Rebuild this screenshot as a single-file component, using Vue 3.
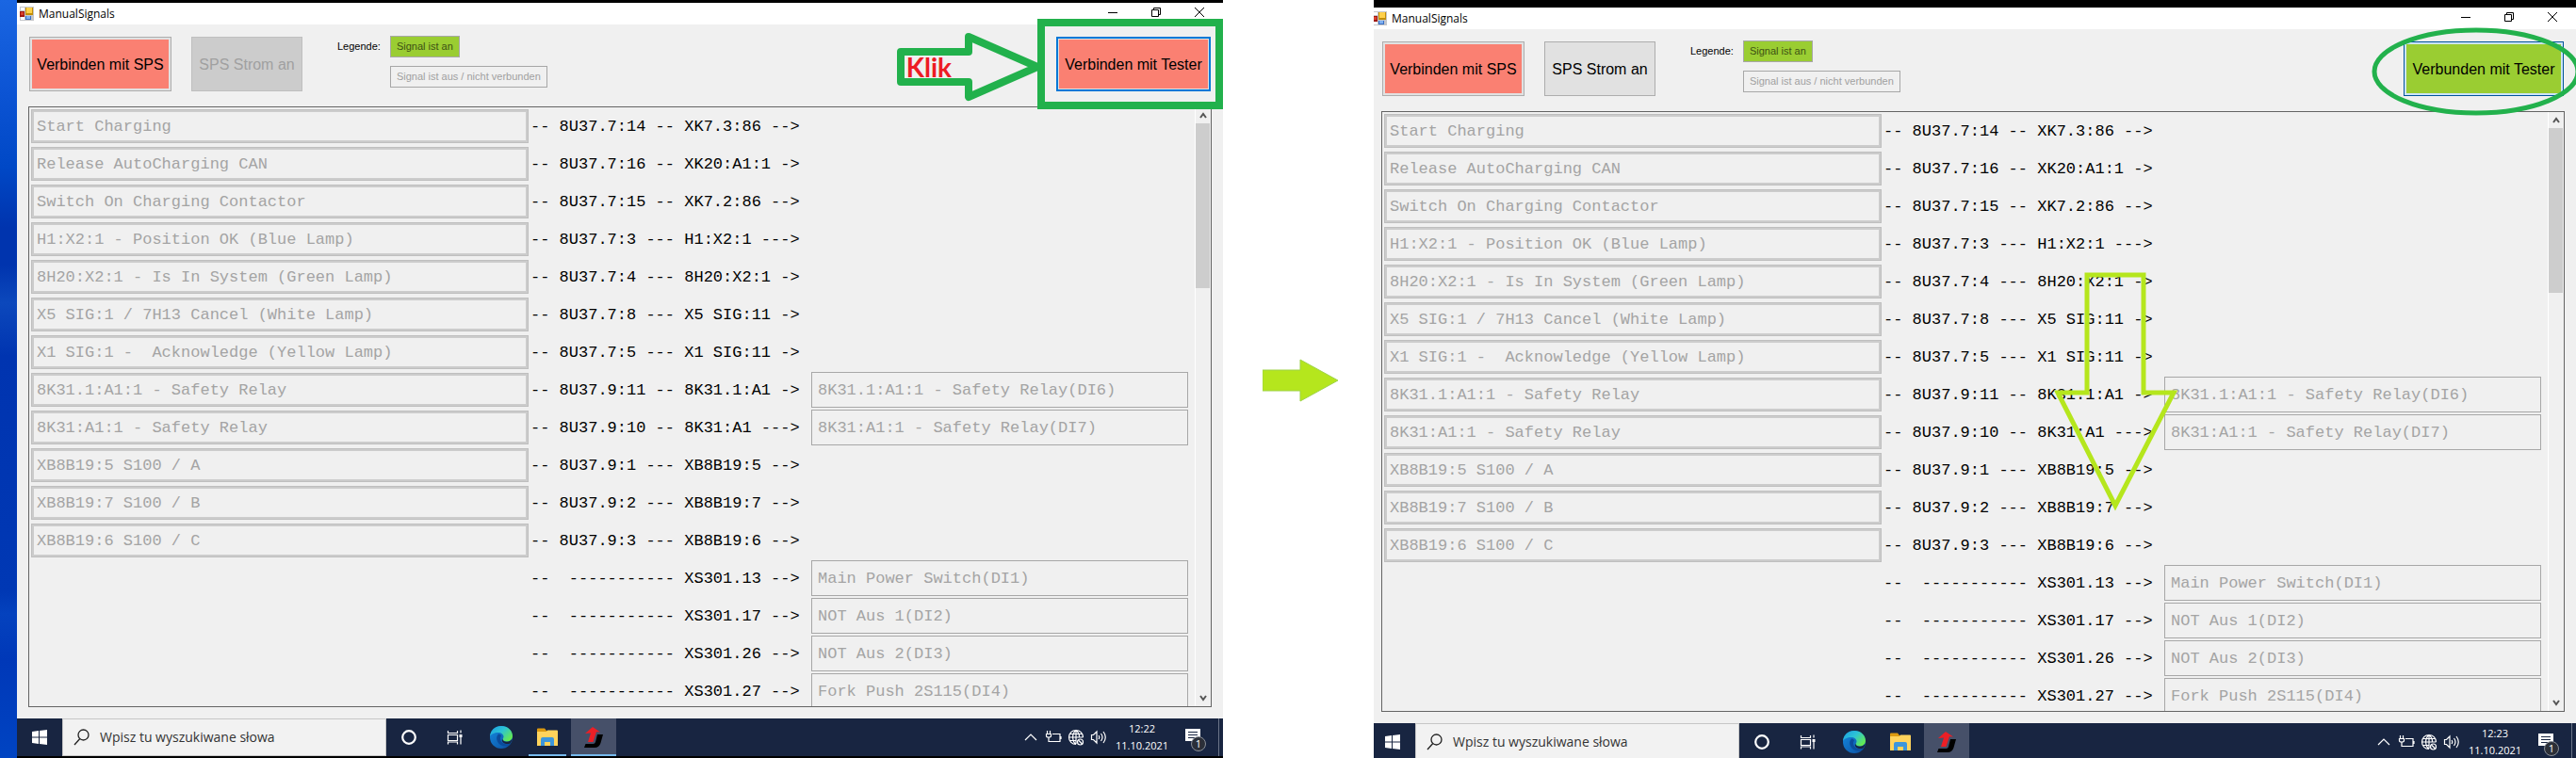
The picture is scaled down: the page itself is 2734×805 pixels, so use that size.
<script setup>
const rows = [
  ['Start Charging', '-- 8U37.7:14 -- XK7.3:86 -->', ''],
  ['Release AutoCharging CAN', '-- 8U37.7:16 -- XK20:A1:1 ->', ''],
  ['Switch On Charging Contactor', '-- 8U37.7:15 -- XK7.2:86 -->', ''],
  ['H1:X2:1 - Position OK (Blue Lamp)', '-- 8U37.7:3 --- H1:X2:1 --->', ''],
  ['8H20:X2:1 - Is In System (Green Lamp)', '-- 8U37.7:4 --- 8H20:X2:1 ->', ''],
  ['X5 SIG:1 / 7H13 Cancel (White Lamp)', '-- 8U37.7:8 --- X5 SIG:11 ->', ''],
  ['X1 SIG:1 -  Acknowledge (Yellow Lamp)', '-- 8U37.7:5 --- X1 SIG:11 ->', ''],
  ['8K31.1:A1:1 - Safety Relay', '-- 8U37.9:11 -- 8K31.1:A1 ->', '8K31.1:A1:1 - Safety Relay(DI6)'],
  ['8K31:A1:1 - Safety Relay', '-- 8U37.9:10 -- 8K31:A1 --->', '8K31:A1:1 - Safety Relay(DI7)'],
  ['XB8B19:5 S100 / A', '-- 8U37.9:1 --- XB8B19:5 -->', ''],
  ['XB8B19:7 S100 / B', '-- 8U37.9:2 --- XB8B19:7 -->', ''],
  ['XB8B19:6 S100 / C', '-- 8U37.9:3 --- XB8B19:6 -->', ''],
  ['', '--  ----------- XS301.13 -->', 'Main Power Switch(DI1)'],
  ['', '--  ----------- XS301.17 -->', 'NOT Aus 1(DI2)'],
  ['', '--  ----------- XS301.26 -->', 'NOT Aus 2(DI3)'],
  ['', '--  ----------- XS301.27 -->', 'Fork Push 2S115(DI4)'],
]

const screens = [
  { id: 'before', connected: false, tester: 'Verbinden mit Tester', time: '12:22' },
  { id: 'after', connected: true, tester: 'Verbunden mit Tester', time: '12:23' },
]
</script>

<template>
  <main class="page">
    <section v-for="s in screens" :key="s.id" class="view" :class="s.id">
      <div class="screen">
        <header class="titlebar">
          <svg class="app-icon" width="15" height="15" viewBox="0 0 15 15" aria-hidden="true">
            <rect width="15" height="15" fill="#c4c6ca" />
            <rect x="1" y="1" width="4" height="3" fill="#fff" />
            <rect x="1" y="11" width="4" height="3" fill="#fff" />
            <rect x="0" y="5" width="5" height="6" fill="#a01a14" />
            <rect x="1" y="6" width="3" height="3" fill="#d8402c" />
            <rect x="6" y="1" width="8" height="8" fill="#c18d08" />
            <rect x="7" y="1" width="6" height="6" fill="#ffd04a" />
            <rect x="6" y="10" width="6" height="4" fill="#3a6fc4" />
            <rect x="7" y="10" width="4" height="3" fill="#7fb0f0" />
          </svg>
          <h1>ManualSignals</h1>
          <div class="caption">
            <button type="button" aria-label="Minimize">
              <svg width="12" height="12" viewBox="0 0 12 12"><path d="M1 6.5h10" /></svg>
            </button>
            <button type="button" aria-label="Restore">
              <svg width="12" height="12" viewBox="0 0 12 12"><path d="M1.500 3.500h7v7h-7zM3.500 3.500v-2h7v7h-2" /></svg>
            </button>
            <button type="button" aria-label="Close">
              <svg width="12" height="12" viewBox="0 0 12 12"><path d="M1 1l10 10M11 1L1 11" /></svg>
            </button>
          </div>
        </header>

        <div class="toolbar">
          <button type="button" class="cmd sps">Verbinden mit SPS</button>
          <button type="button" class="cmd power" :disabled="!s.connected">SPS Strom an</button>
          <div class="legend">
            <span>Legende:</span>
            <div class="legend-items">
              <span class="on">Signal ist an</span>
              <span class="off">Signal ist aus / nicht verbunden</span>
            </div>
          </div>
          <button type="button" class="cmd tester" :class="{ connected: s.connected }">{{ s.tester }}</button>
        </div>

        <div class="panel">
          <ul class="rows">
            <li v-for="r in rows" :key="r[1]">
              <button v-if="r[0]" type="button" class="signal" disabled>{{ r[0] }}</button>
              <span class="wire">{{ r[1] }}</span>
              <span v-if="r[2]" class="input-signal">{{ r[2] }}</span>
            </li>
          </ul>
          <div class="scrollbar" aria-hidden="true">
            <svg width="8" height="8" viewBox="0 0 8 8"><path d="M1 6l3-4 3 4" /></svg>
            <div class="track"><div class="thumb"></div></div>
            <svg width="8" height="8" viewBox="0 0 8 8"><path d="M1 2l3 4 3-4" /></svg>
          </div>
        </div>

        <footer class="taskbar">
          <button type="button" class="start" aria-label="Start">
            <svg width="16" height="16" viewBox="0 0 16 16" fill="#fff">
              <path d="M0 2l7-1v6.500H0zM8 .9L16 0v7.500H8zM0 8.500h7V15l-7-1zM8 8.500h8V16l-8-1z" />
            </svg>
          </button>
          <label class="search">
            <svg width="17" height="18" viewBox="0 0 17 18" fill="none" stroke="#222" stroke-width="1.300">
              <circle cx="10.500" cy="6.500" r="5.500" /><path d="M6.800 10.500L1 17" />
            </svg>
            <input type="text" placeholder="Wpisz tu wyszukiwane słowa" aria-label="Wpisz tu wyszukiwane słowa" />
          </label>
          <nav class="apps">
            <button type="button" aria-label="Cortana">
              <svg width="18" height="18" viewBox="0 0 18 18"><circle cx="9" cy="9" r="6.800" fill="none" stroke="#fff" stroke-width="2.200" /></svg>
            </button>
            <button type="button" aria-label="Task view">
              <svg width="18" height="18" viewBox="0 0 18 18" fill="none" stroke="#fff" stroke-width="1.200">
                <path d="M1.500 2v2.500h10V2M1.500 6.500h10v6h-10zM1.500 16.500v-2.500h10v2.500M15 1.500v3M15 9v7.500" /><path d="M13.500 6h3v3h-3z" fill="#fff" stroke="none" />
              </svg>
            </button>
            <button type="button" aria-label="Edge">
              <svg width="24" height="24" viewBox="0 0 24 24">
                <defs>
                  <linearGradient :id="'edge-top-' + s.id" x1="0" y1="0" x2="1" y2="0.700">
                    <stop offset="0" stop-color="#1b9de2" /><stop offset="0.500" stop-color="#2cc3d6" /><stop offset="1" stop-color="#66eb4e" />
                  </linearGradient>
                  <linearGradient :id="'edge-low-' + s.id" x1="0" y1="0" x2="1" y2="1">
                    <stop offset="0" stop-color="#1489e0" /><stop offset="1" stop-color="#0c4fa0" />
                  </linearGradient>
                </defs>
                <circle cx="12" cy="12" r="12" :fill="`url(#edge-low-${s.id})`" />
                <path d="M0 11C.5 4.500 5.500 0 12 0c7 0 12 5 12 10.500 0 3.500-2.500 6-6 6-2.500 0-4.500-1-4.500-2.200 0-.9 1-1.300 1-3C14.500 9 12 7 8.800 7 4.500 7 1 9 0 11z" :fill="`url(#edge-top-${s.id})`" />
                <path d="M9 8.500c-2 2-2.500 5-1 8 1.500 3.200 5 5 8.500 5 2.500-.2 4.500-1.500 5.500-3-2 1-5 1.500-7.500 0C11 16.500 10 13 12 10.500c-.5-1.200-1.500-1.800-3-2z" fill="#0b4c9c" />
                <path d="M13.500 13.500c-.4 1.800 1.500 3.300 4.500 3.300 2.200 0 4.300-1 5.500-3-.3 2-1 3.500-2 4.700-2.500 1-5.500.7-7.300-.7-1.500-1.300-1.800-3-.7-4.300z" fill="#182541" />
              </svg>
            </button>
            <button type="button" class="running" aria-label="Explorer">
              <svg width="22" height="20" viewBox="0 0 22 20">
                <path d="M0 1.500Q0 .5 1 .5h7l2 2.500h11q1 0 1 1v3H0z" fill="#dc9a10" />
                <path d="M0 4h10l1-1.500h10q1 0 1 1V19H0z" fill="#ffd35c" />
                <path d="M4 19v-7q0-2 2-2h10q2 0 2 2v7h-4v-4H8v4z" fill="#3c96dc" />
              </svg>
            </button>
            <button type="button" class="running active" aria-label="ManualSignals">
              <svg width="22" height="22" viewBox="0 0 22 22">
                <path d="M15 8h6l-2.500 9q-1.500 5-6.500 5H1l1.500-4h8q2 0 2.500-2z" fill="#000" />
                <path d="M10 0l8 5.500-4-.2L10.500 16H5l3-9.500-6 .5z" fill="#ec1f26" />
              </svg>
            </button>
          </nav>
          <div class="tray">
            <button type="button" aria-label="Hidden icons">
              <svg width="18" height="18" viewBox="0 0 18 18"><path d="M3 12l6-6 6 6" /></svg>
            </button>
            <button type="button" aria-label="Battery">
              <svg width="18" height="18" viewBox="0 0 18 18"><path d="M8 5.500h8v8H6M2.500 2v3M5.500 2v3M1.500 5.500h5v2q0 1.500-2.500 1.500t-2.500-1.500zM4 9v4.500h3M17 8v3" /></svg>
            </button>
            <button type="button" aria-label="Network">
              <svg width="18" height="18" viewBox="0 0 18 18"><path d="M9 16.500A7.500 7.500 0 1 1 16.500 9M9 16.500C4.500 13 4.500 5 9 1.500 12 4 12.700 6.500 12.500 9M9 1.500V16M1.500 9h15M2.500 5.500h13M2.500 12.500h7" /><circle cx="13.500" cy="14" r="3" /><path d="M11.500 12l4 4" /></svg>
            </button>
            <button type="button" aria-label="Volume">
              <svg width="18" height="18" viewBox="0 0 18 18"><path d="M1.500 6.500h2L7 3v12l-3.500-3.500h-2zM9 7q1.500 2 0 4M11.500 5q3 4 0 8M14 3q4.500 6 0 12" /></svg>
            </button>
          </div>
          <div class="clock"><time>{{ s.time }}</time><span>11.10.2021</span></div>
          <button type="button" class="notify" aria-label="Notifications">
            <svg width="18" height="18" viewBox="0 0 18 18"><path d="M1 0h16v13h-4v4l-4-4H1z" fill="#fff" /><path d="M4 3.500h10M4 6.500h10M4 9.500h7" stroke="#182541" fill="none" /></svg>
            <span class="badge">1</span>
          </button>
        </footer>
      </div>

      <template v-if="!s.connected">
        <div class="mark-box"></div>
        <svg class="mark-arrow" width="156" height="76" viewBox="0 0 156 76" aria-hidden="true">
          <path d="M6 22h72V6l73 32-73 32V54H6z" fill="none" stroke="#22b14c" stroke-width="8" stroke-linejoin="round" />
        </svg>
        <strong class="mark-text">Klik</strong>
      </template>
      <template v-else>
        <svg class="mark-ellipse" width="222" height="94" viewBox="0 0 222 94" aria-hidden="true">
          <ellipse cx="111" cy="47" rx="108" ry="44" fill="none" stroke="#22b14c" stroke-width="5" />
        </svg>
        <svg class="mark-down" width="132" height="260" viewBox="0 0 132 260" aria-hidden="true">
          <path d="M35 5h60v125h32L65 250 4 130h31z" fill="none" stroke="#b5e61d" stroke-width="5" />
        </svg>
      </template>
    </section>

    <div class="between">
      <svg width="80" height="46" viewBox="0 0 80 46" role="img" aria-label="Next step">
        <path d="M0 12h40V1l40 22-40 22V34H0z" fill="#b5e61d" stroke="#9ed34a" stroke-width="1" />
      </svg>
    </div>
  </main>
</template>

<style>
body {
  background: #fff;
}
</style>

<style scoped>
* {
  box-sizing: border-box;
}

button,
input {
  margin: 0;
  padding: 0;
  border: 0;
  background: none;
  font: inherit;
  color: inherit;
}

.page {
  display: grid;
  grid-template-columns: 18px 1280fr 160px 1276fr;
  height: 100vh;
  overflow: hidden;
  background: linear-gradient(#1a66e2, #0c54d4 12%, #0048c6 22%, #0034ae 30%, #0034ae 35%, #0c48bc 40%, #0034b0 47%, #0038b4 78%, #0442be 81%, #0038b8 87%, #0044c2) 0 0 / 18px 100% no-repeat;
  font-family: "Liberation Sans", Arial, sans-serif;
  color: #000;
}

.view {
  position: relative;
  grid-row: 1;
  min-width: 0;
  overflow: hidden;
  background: #000;
}

.before {
  grid-column: 2;
  padding: 3px 0 2px;
}

.after {
  grid-column: 4;
  padding-top: 8px;
}

.between {
  grid-column: 3;
  grid-row: 1;
  display: flex;
  align-items: center;
  justify-content: center;
  padding: 2px 0 0 4px;
  background: #fff;
}

.screen {
  display: flex;
  flex-direction: column;
  height: 100%;
  background: #f0f0f0;
}

.after .screen {
  height: calc(100% + 3px);
  margin-left: -4px;
}

.titlebar {
  display: flex;
  flex: none;
  align-items: center;
  height: 23px;
  padding: 0 2px 0 3px;
  background: #fff;
}

.titlebar h1 {
  margin: 0 0 0 5px;
  font: 12px/18px "Open Sans", "Noto Sans", sans-serif;
}

.caption {
  display: flex;
  margin-left: auto;
}

.caption button {
  display: grid;
  place-items: center;
  width: 46px;
  height: 20px;
  margin-bottom: 3px;
}

.caption svg {
  fill: none;
  stroke: #000;
}

.toolbar {
  display: flex;
  flex: none;
  align-items: flex-start;
  height: 87px;
  padding: 13px 13px 0;
}

.cmd {
  height: 58px;
  padding-top: 2px;
  border: 1px solid #adadad;
  font-size: 16px;
  line-height: 20px;
  white-space: nowrap;
}

.sps {
  width: 151px;
  background: #fa8072;
  box-shadow: inset 0 0 0 2px #e1e1e1;
}

.power {
  width: 118px;
  margin-left: 21px;
  background: #e1e1e1;
}

.power:disabled {
  border-color: #bfbfbf;
  background: #ccc;
  color: #a0a0a0;
}

.tester {
  width: 164px;
  margin-left: auto;
  border: 2px solid #0078d7;
  background: #fa8072;
  box-shadow: inset 0 0 0 1px #e1e1e1;
}

.tester.connected {
  width: 170px;
  border: 1px solid #005499;
  background: #9acd32;
  box-shadow: inset 0 0 0 2px #cce4f7;
}

.legend {
  display: flex;
  gap: 10px;
  margin: -1px 0 0 37px;
  font-size: 11px;
  line-height: 23px;
}

.legend-items {
  display: flex;
  flex-direction: column;
  align-items: flex-start;
  gap: 9px;
}

.legend-items span {
  padding: 0 6px;
  border: 1px solid #a7a7a7;
  line-height: 21px;
}

.on {
  background: #9acd32;
  color: #3d5214;
}

.off {
  color: #a0a0a0;
}

.panel {
  display: flex;
  flex: 1;
  min-height: 0;
  margin: 0 12px 12px;
  border: 1px solid #646464;
}

.rows {
  flex: 1;
  min-width: 0;
  margin: 0;
  padding: 0 7px 0 2px;
  overflow: hidden;
  list-style: none;
  font: 17px/20px "Liberation Mono", "Courier New", monospace;
  white-space: pre;
}

.rows li {
  display: grid;
  grid-template-columns: minmax(0, 528fr) 300px minmax(0, 400fr);
  align-items: center;
  height: 40px;
}

.signal {
  grid-column: 1;
  height: 36px;
  padding: 2px 5px 0;
  border: 1px solid #bfbfbf;
  box-shadow: inset 0 0 0 2px #ccc;
  color: #a4a4a4;
  text-align: left;
  white-space: pre;
}

.wire {
  grid-column: 2;
  padding: 2px 0 0 2px;
}

.input-signal {
  grid-column: 3;
  height: 38px;
  padding-left: 6px;
  border: 1px solid #a7a7a7;
  color: #a4a4a4;
  line-height: 38px;
}

.scrollbar {
  display: flex;
  flex: none;
  flex-direction: column;
  align-items: center;
  width: 17px;
  padding: 5px 0;
  border-left: 1px solid #fff;
}

.scrollbar svg {
  fill: none;
  stroke: #555;
  stroke-width: 2;
}

.track {
  flex: 1;
  width: 100%;
  padding: 4px 1px 4px 0;
}

.thumb {
  height: 29%;
  background: #cdcdcd;
}

.taskbar {
  display: flex;
  flex: none;
  height: 40px;
  background: #182541;
  color: #fff;
  font-family: "Open Sans", "Noto Sans", sans-serif;
}

.taskbar button {
  display: grid;
  place-items: center;
}

.start {
  width: 48px;
}

.search {
  display: flex;
  align-items: center;
  gap: 11px;
  width: 344px;
  padding-left: 11px;
  border: 1px solid #c6c6c6;
  background: #f2f2f2;
}

.search input {
  flex: 1;
  min-width: 0;
  font-size: 14px;
  line-height: 20px;
  color: #333;
}

.search input::placeholder {
  color: #333;
  opacity: 1;
}

.apps {
  display: flex;
  gap: 1px;
}

.apps button {
  position: relative;
  width: 48px;
}

.apps .active {
  background: #465069;
}

.running::after {
  content: "";
  position: absolute;
  right: 4px;
  bottom: 0;
  left: 4px;
  height: 2px;
  background: #76b9ed;
}

.running.active::after {
  right: 0;
  left: 0;
}

.tray {
  display: flex;
  margin-left: auto;
}

.tray button {
  width: 24px;
}

.tray svg {
  fill: none;
  stroke: #fff;
  stroke-width: 1.2;
}

.clock {
  display: flex;
  flex-direction: column;
  align-items: center;
  justify-content: center;
  width: 68px;
  font-size: 11px;
  line-height: 18px;
}

.notify {
  position: relative;
  width: 48px;
  margin-right: 4px;
  border-right: 1px solid #6b7488;
  padding-right: 8px;
}

.badge {
  position: absolute;
  top: 19px;
  left: 18px;
  width: 16px;
  height: 16px;
  border: 1px solid #8a8f98;
  border-radius: 50%;
  background: #2b2f38;
  font-size: 11px;
  line-height: 14px;
  text-align: center;
}

.mark-box {
  position: absolute;
  top: 20px;
  right: 0;
  width: 197px;
  height: 96px;
  border: 8px solid #22b14c;
}

.mark-arrow {
  position: absolute;
  top: 33px;
  right: 192px;
}

.mark-text {
  position: absolute;
  top: 54px;
  right: 288px;
  font: 700 28px/34px "Lato", "Open Sans", sans-serif;
  color: #ed1c24;
}

.mark-ellipse {
  position: absolute;
  top: 29px;
  right: -5px;
}

.mark-down {
  position: absolute;
  top: 287px;
  right: 422px;
}
</style>
